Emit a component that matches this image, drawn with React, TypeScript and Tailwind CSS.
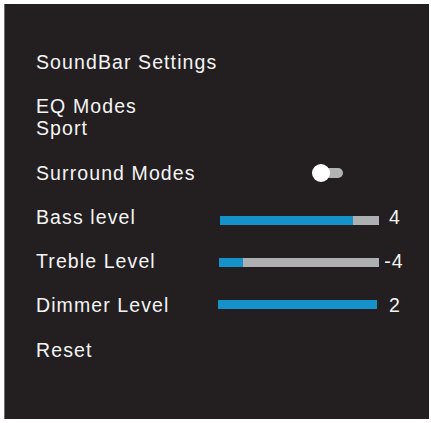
import React from "react";

const font = { fontFamily: '"Liberation Sans", Arial, Helvetica, sans-serif' };

function Bar({ pct, ml, w, mt }: { pct: number; ml: string; w: string; mt: string }) {
  return (
    <div className={`h-[9px] bg-[#aeafb1] ${ml} ${w} ${mt}`}>
      <div className="h-full bg-[#1592ca]" style={{ width: `${pct}%` }} />
    </div>
  );
}

export default function App() {
  return (
    <div className="w-[431px] h-[423px] bg-white pt-[4px] pl-[4px]" style={font}>
      <div className="w-[425px] h-[415px] bg-[#231f20] border-l border-[#6b6b6b] text-[#f4f4f4] text-[19.5px] leading-[22px] tracking-[1.1px] pt-[47px] pl-[31px]">
        <div className="h-[22px]">SoundBar Settings</div>
        <div className="mt-[22px] h-[22px]">EQ Modes</div>
        <div className="h-[22px]">Sport</div>

        <div className="mt-[23px] h-[22px] flex items-center">
          <div className="w-[184px]">Surround Modes</div>
          <div className="ml-[92px] relative w-[31px] h-[18px]">
            <div className="absolute left-[10px] top-[4px] w-[21px] h-[10px] rounded-r-full bg-[#b3b3b3]" />
            <div className="absolute left-0 top-0 w-[18px] h-[18px] rounded-full bg-white" />
          </div>
        </div>

        <div className="mt-[22px] h-[22px] flex items-start">
          <div className="w-[184px]">Bass level</div>
          <Bar pct={83.6} ml="ml-0" w="w-[159px]" mt="mt-[10px]" />
          <div className="w-[32px] text-center">4</div>
        </div>

        <div className="mt-[22px] h-[22px] flex items-start">
          <div className="w-[184px]">Treble Level</div>
          <Bar pct={15.2} ml="-ml-[1px]" w="w-[160px]" mt="mt-[8px]" />
          <div className="w-[30px] text-center">-4</div>
        </div>

        <div className="mt-[22px] h-[22px] flex items-start">
          <div className="w-[184px]">Dimmer Level</div>
          <Bar pct={100} ml="-ml-[2px]" w="w-[159px]" mt="mt-[6px]" />
          <div className="w-[36px] text-center">2</div>
        </div>

        <div className="mt-[23px] h-[22px]">Reset</div>
      </div>
    </div>
  );
}
